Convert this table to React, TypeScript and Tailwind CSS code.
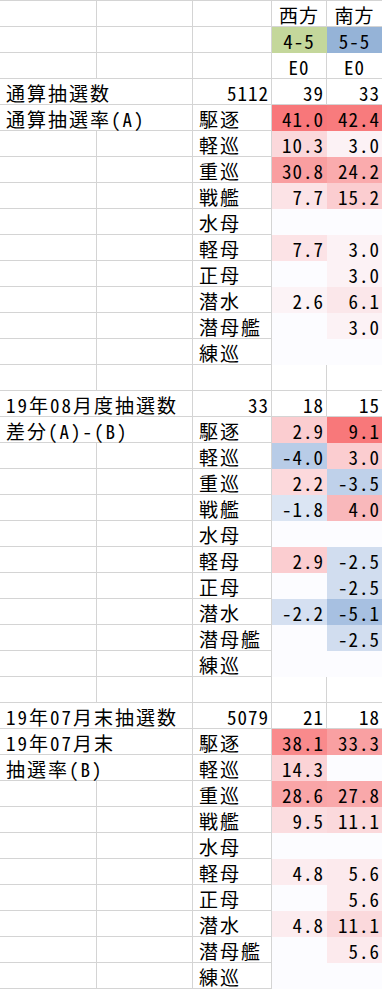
import React from 'react'

const SHIPS = ['駆逐', '軽巡', '重巡', '戦艦', '水母', '軽母', '正母', '潜水', '潜母艦', '練巡']

type Val = [string, string]

type Block = {
  labels: string[]
  d: Val[]
  e: Val[]
}

const W = 'bg-[#fcfcff]'

const BLOCKS: Block[] = [
  {
    labels: ['通算抽選率(A)'],
    d: [
      ['41.0', 'bg-[#f8777a]'], ['10.3', 'bg-[#fbd8db]'], ['30.8', 'bg-[#f99ea0]'], ['7.7', 'bg-[#fce3e6]'], ['', W],
      ['7.7', 'bg-[#fce3e6]'], ['', W], ['2.6', 'bg-[#fcf3f6]'], ['', W], ['', W],
    ],
    e: [
      ['42.4', 'bg-[#f87b7d]'], ['3.0', 'bg-[#fcf2f5]'], ['24.2', 'bg-[#faabad]'], ['15.2', 'bg-[#fbcdd0]'], ['', W],
      ['3.0', 'bg-[#fcf2f5]'], ['3.0', 'bg-[#fcf2f5]'], ['6.1', 'bg-[#fbe7ea]'], ['3.0', 'bg-[#fcf2f5]'], ['', W],
    ],
  },
  {
    labels: ['差分(A)-(B)'],
    d: [
      ['2.9', 'bg-[#fbcdd0]'], ['-4.0', 'bg-[#b8cce7]'], ['2.2', 'bg-[#fcd9dc]'], ['-1.8', 'bg-[#dbe5f3]'], ['', W],
      ['2.9', 'bg-[#fbcdd0]'], ['', W], ['-2.2', 'bg-[#d5e0f1]'], ['', W], ['', W],
    ],
    e: [
      ['9.1', 'bg-[#f8787a]'], ['3.0', 'bg-[#fbcdd0]'], ['-3.5', 'bg-[#bfd1ea]'], ['4.0', 'bg-[#f9b8bb]'], ['', W],
      ['-2.5', 'bg-[#d1ddef]'], ['-2.5', 'bg-[#d1ddef]'], ['-5.1', 'bg-[#a7c0e1]'], ['-2.5', 'bg-[#d1ddef]'], ['', W],
    ],
  },
  {
    labels: ['19年07月末', '抽選率(B)'],
    d: [
      ['38.1', 'bg-[#f98a8c]'], ['14.3', 'bg-[#fbd3d6]'], ['28.6', 'bg-[#f9a5a7]'], ['9.5', 'bg-[#fbdde0]'], ['', W],
      ['4.8', 'bg-[#fcecef]'], ['', W], ['4.8', 'bg-[#fcecef]'], ['', W], ['', W],
    ],
    e: [
      ['33.3', 'bg-[#f9a0a2]'], ['', W], ['27.8', 'bg-[#f9a8aa]'], ['11.1', 'bg-[#fbd9dc]'], ['', W],
      ['5.6', 'bg-[#fceaed]'], ['5.6', 'bg-[#fceaed]'], ['11.1', 'bg-[#fbd9dc]'], ['5.6', 'bg-[#fceaed]'], ['', W],
    ],
  },
]

const COUNTS: [string, string, string, string][] = [
  ['通算抽選数', '5112', '39', '33'],
  ['19年08月度抽選数', '33', '18', '15'],
  ['19年07月末抽選数', '5079', '21', '18'],
]

const line = 'border-r border-b border-[#d4d4d4]'
const fill = 'border-r border-b border-transparent'
const cell = 'h-[26px] flex items-end pb-[2px] whitespace-nowrap'

function Row({ children }: { children: React.ReactNode }) {
  return <div className="grid grid-cols-[97px_96px_79px_55px_56px]">{children}</div>
}

function Empty() {
  return <div className={`${cell} ${line}`} />
}

function Num({ v, bg }: { v: string; bg?: string }) {
  return (
    <div className={`${cell} ${bg ? `${fill} ${bg}` : line} justify-end pr-[2px] tracking-[1px]`}>
      {v}
    </div>
  )
}

function Label({ v, span }: { v: string; span?: boolean }) {
  return (
    <div className={`${cell} ${line} pl-[6px] tracking-[2px] ${span ? 'col-span-2' : ''}`}>
      {v}
    </div>
  )
}

function Head({ v, bg }: { v: string; bg?: string }) {
  return (
    <div className={`${cell} ${bg ? `${fill} ${bg}` : line} justify-center tracking-[1px]`}>
      {v}
    </div>
  )
}

export default function App() {
  return (
    <div className="w-[382px] h-[989px] overflow-hidden bg-white text-black text-[19px] leading-[19px] font-light font-['Noto_Sans_Mono_CJK_JP','Noto_Sans_CJK_JP',monospace]">
      <div className="border-t border-[#d4d4d4]">
        <Row>
          <Empty /><Empty /><Empty />
          <Head v="西方" />
          <Head v="南方" />
        </Row>
        <Row>
          <Empty /><Empty /><Empty />
          <Head v="4-5" bg="bg-[#c4d79b]" />
          <Head v="5-5" bg="bg-[#95b3d7]" />
        </Row>
        <Row>
          <Empty /><Empty /><Empty />
          <Head v="E0" />
          <Head v="E0" />
        </Row>
        {BLOCKS.map((b, bi) => (
          <React.Fragment key={bi}>
            {bi > 0 && (
              <Row>
                <Empty /><Empty /><Empty /><Empty /><Empty />
              </Row>
            )}
            <Row>
              <Label v={COUNTS[bi][0]} span />
              <Num v={COUNTS[bi][1]} />
              <Num v={COUNTS[bi][2]} />
              <Num v={COUNTS[bi][3]} />
            </Row>
            {SHIPS.map((s, i) => (
              <Row key={s}>
                {b.labels[i] ? <Label v={b.labels[i]} span /> : (<><Empty /><Empty /></>)}
                <Label v={s} />
                <Num v={b.d[i][0]} bg={b.d[i][1]} />
                <Num v={b.e[i][0]} bg={b.e[i][1]} />
              </Row>
            ))}
          </React.Fragment>
        ))}
      </div>
    </div>
  )
}
